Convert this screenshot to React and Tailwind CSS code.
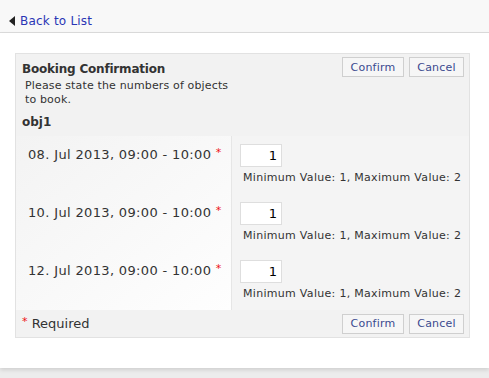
export default function App() {
  const rows = ["08. Jul 2013, 09:00 - 10:00", "10. Jul 2013, 09:00 - 10:00", "12. Jul 2013, 09:00 - 10:00"];
  const Btn = ({ children, w }) => (
    <button className={`h-[20px] ${w} border border-[#cfcfcf] bg-[#f6f6f6] text-[11px] text-[#3b4a8f] leading-none tracking-[0.2px]`}>{children}</button>
  );
  return (
    <div className="w-[489px] h-[378px] bg-[#ececec] text-[#333]" style={{ fontFamily: '"DejaVu Sans", Verdana, sans-serif' }}>
      <div className="h-[33px] bg-[#f8f8f8] border-b border-[#dcdcdc] flex items-center pl-[9px] pt-[10px]">
        <svg width="6" height="10" viewBox="0 0 6 10" className="mr-[5px]"><path d="M6 0 L0 5 L6 10 Z" fill="#222" /></svg>
        <span className="text-[12px] text-[#2a35b5] tracking-[0.2px]">Back to List</span>
      </div>
      <div className="h-[335px] bg-white pt-[20px] pl-[15px] shadow-[0_2px_4px_rgba(0,0,0,0.12)]">
        <div className="w-[455px] border border-[#e2e2e2] bg-[#f2f2f2]">
          <div className="flex justify-between pl-[6px] pr-[5px] pt-[3px]">
            <div>
              <div className="text-[12px] font-bold text-[#333] mt-[3px] tracking-[-0.2px]">Booking Confirmation</div>
              <div className="text-[11px] leading-[14px] pl-[3px] w-[215px] text-[#333] mt-[1px] tracking-[0.15px]">Please state the numbers of objects to book.</div>
            </div>
            <div className="flex gap-[5px]">
              <Btn w="w-[62px]">Confirm</Btn>
              <Btn w="w-[55px]">Cancel</Btn>
            </div>
          </div>
          <div className="text-[12px] font-bold pl-[6px] mt-[6px] h-[23px]">obj1</div>
          <div className="flex">
            <div className="w-[216px] bg-gradient-to-br from-[#f3f3f3] to-[#fefefe] border-r border-[#e6e6e6]">
              {rows.map((r) => (
                <div key={r} className="h-[58px] pl-[12px] pt-[9px] text-[13px] text-[#333] tracking-[0.35px]">
                  {r} <span className="text-[#ee1111] text-[11px] align-top">*</span>
                </div>
              ))}
            </div>
            <div className="flex-1 bg-[#f4f4f4]">
              {rows.map((r) => (
                <div key={r} className="h-[58px] pl-[8px] pt-[8px]">
                  <div className="w-[42px] h-[23px] bg-white border border-[#dedede] text-right pr-[4px] text-[13px] leading-[21px] text-black">1</div>
                  <div className="text-[11px] text-[#333] mt-[3px] pl-[3px] tracking-[0.3px]">Minimum Value: 1, Maximum Value: 2</div>
                </div>
              ))}
            </div>
          </div>
          <div className="h-[27px] flex justify-between items-center pl-[6px] pr-[5px]">
            <div className="text-[13px] text-[#333]"><span className="text-[#ee1111] text-[11px] align-top">*</span> Required</div>
            <div className="flex gap-[5px]">
              <Btn w="w-[62px]">Confirm</Btn>
              <Btn w="w-[55px]">Cancel</Btn>
            </div>
          </div>
        </div>
      </div>
    </div>
  );
}
